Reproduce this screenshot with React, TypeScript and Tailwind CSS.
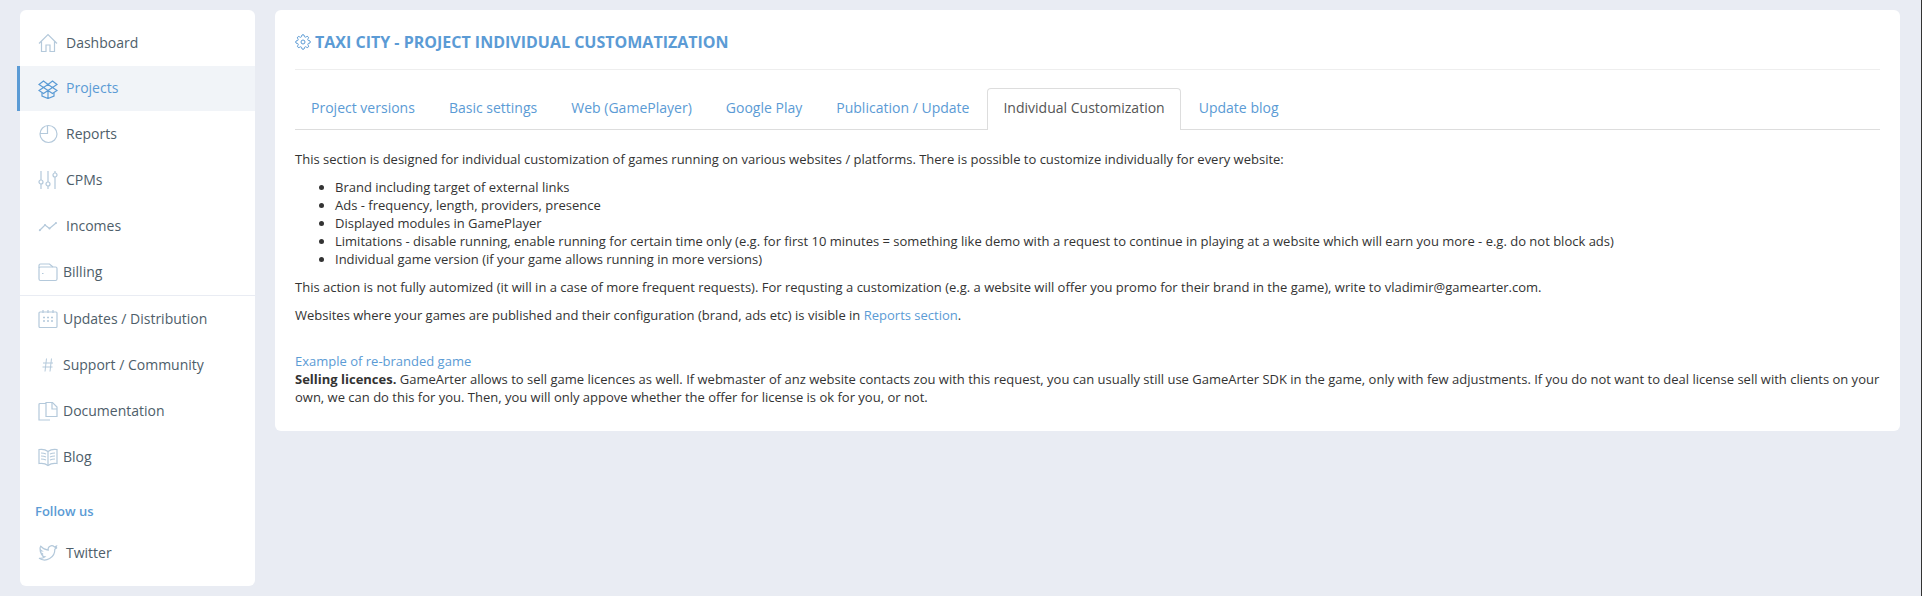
import React from "react";

const font = { fontFamily: '"Open Sans", sans-serif' };

function Ic({ children, className = "" }: { children: React.ReactNode; className?: string }) {
  return (
    <svg viewBox="0 0 20 20" fill="none" stroke="currentColor" strokeWidth="1.2" className={"mt-[2px] w-5 h-5 shrink-0 " + className}>
      {children}
    </svg>
  );
}

const icons: Record<string, React.ReactNode> = {
  home: <path d="M1 10.5 10 1.500l9 9M3.500 8.500v10h4.500v-6.500h4v6.500h4.500v-10" />,
  box: (
    <>
      <path d="M5.500 2 1 5.500l4.500 3L10 5.500zM14.500 2 19 5.500l-4.500 3L10 5.500zM1 11.500l4.500-3 4.500 3-4.500 3zM19 11.500l-4.500-3-4.500 3 4.500 3z" />
      <path d="M4 14v3l6 2.500 6-2.500v-3M10 11.500v8" />
    </>
  ),
  pie: (
    <>
      <circle cx="10.500" cy="10" r="8.500" />
      <path d="M9.500 1.500v8H2" />
    </>
  ),
  sliders: (
    <>
      <path d="M3 1v9M3 14v5M10 1v11M10 16v3M17 1v2M17 7v12" />
      <circle cx="3" cy="12" r="2" />
      <circle cx="10" cy="14" r="2" />
      <circle cx="17" cy="5" r="2" />
    </>
  ),
  chart: (
    <>
      <path d="M1.500 14.500 7 9l4.500 3.500L18 7" strokeWidth="1.300" />
      <circle cx="1.800" cy="14.300" r="1" fill="currentColor" stroke="none" />
      <circle cx="7" cy="9" r="1" fill="currentColor" stroke="none" />
      <circle cx="11.500" cy="12.500" r="1" fill="currentColor" stroke="none" />
      <circle cx="18" cy="7" r="1" fill="currentColor" stroke="none" />
    </>
  ),
  wallet: (
    <>
      <path d="M1 6V3.500A1.500 1.500 0 0 1 2.500 2h9L15 5" />
      <rect x="1" y="5" width="18" height="13.500" rx="1.500" />
      <path d="M4 11.500h1.500" />
    </>
  ),
  cal: (
    <>
      <rect x="1" y="3" width="18" height="15.500" rx="1" />
      <path d="M5 1v3M10 1v3M15 1v3" />
      <path d="M5 8.500h2M9 8.500h2M13 8.500h2M5 12h2M9 12h2M13 12h2" strokeWidth="1.500" />
    </>
  ),
  hash: <path d="M8.500 3.500 7 16.500M13.500 3.500l-1.500 13M5 8h10M4.500 12h10" strokeWidth="1" />,
  doc: (
    <>
      <path d="M8 2.500H2a1 1 0 0 0-1 1V19h11" />
      <path d="M8 4v11.500h11V6l-4.500-4.500H8z" />
      <path d="M14 1.500V8h5" />
    </>
  ),
  book: (
    <>
      <path d="M1 2.500C4 2 7.500 2.500 10 4.500 12.500 2.500 16 2 19 2.500v14c-3-.5-6.500 0-9 2-2.500-2-6-2.500-9-2z" />
      <path d="M10 4.500v14M3 6c2 0 3.500.3 5 1M3 9c2 0 3.500.3 5 1M3 12c2 0 3.500.3 5 1M17 6c-2 0-3.500.3-5 1M17 9c-2 0-3.500.3-5 1M17 12c-2 0-3.500.3-5 1" />
    </>
  ),
  twitter: (
    <path d="M19 4.500c-.7.300-1.400.500-2 .600.700-.500 1.300-1.200 1.500-2-.700.400-1.400.700-2.200.800a3.600 3.600 0 0 0-6.100 3.300C7.300 7 4.700 5.500 2.700 3.200c-1 1.700-.5 3.800 1.100 4.800-.6 0-1.100-.2-1.600-.4 0 1.700 1.200 3.200 2.900 3.600-.5.100-1.100.2-1.600.1.500 1.400 1.800 2.400 3.400 2.500A7.300 7.300 0 0 1 1 15.300a10.300 10.300 0 0 0 15.800-9.100c.9-.400 1.600-1 2.200-1.700z" />
  ),
};

type Item = { label: string; icon: string; active?: boolean; wide: boolean; sep?: boolean };

const items: Item[] = [
  { label: "Dashboard", icon: "home", wide: true },
  { label: "Projects", icon: "box", active: true, wide: true },
  { label: "Reports", icon: "pie", wide: true },
  { label: "CPMs", icon: "sliders", wide: true },
  { label: "Incomes", icon: "chart", wide: true },
  { label: "Billing", icon: "wallet", wide: false, sep: true },
  { label: "Updates / Distribution", icon: "cal", wide: false },
  { label: "Support / Community", icon: "hash", wide: false },
  { label: "Documentation", icon: "doc", wide: false },
  { label: "Blog", icon: "book", wide: false },
];

function NavRow({ it }: { it: Item }) {
  return (
    <a
      className={
        "flex items-center pb-[2px] text-[14px] " +
        (it.wide ? "gap-[8px] " : "gap-[5px] ") +
        (it.active
          ? "-ml-[3px] h-[45px] border-l-[3px] border-[#5b9bd5] bg-[#f1f4f8] pl-[18px] text-[#5b9bd5]"
          : "h-[46px] pl-[18px] text-[#4e5e6a]")
      }
    >
      <Ic className={it.active ? "text-[#5b9bd5]" : "text-[#b4c9db]"}>{icons[it.icon]}</Ic>
      <span>{it.label}</span>
    </a>
  );
}

const tabs = ["Project versions", "Basic settings", "Web (GamePlayer)", "Google Play", "Publication / Update", "Individual Customization", "Update blog"];

export default function App() {
  return (
    <div style={font} className="flex h-[596px] w-full overflow-hidden bg-[#e9ecf3] text-[13px] text-[#333]">
      <div className="flex min-w-0 flex-1 gap-5 py-2.5 pl-5 pr-[21px]">
        <aside className="flex w-[235px] shrink-0 flex-col rounded-md bg-white pt-[10px]">
          {items.map((it) => (
            <React.Fragment key={it.label}>
              <NavRow it={it} />
              {it.sep && <div className="h-px bg-[#e9ecf3]" />}
            </React.Fragment>
          ))}
          <div className="mt-[22px] pl-[15px] text-[13px] font-semibold leading-[18px] text-[#5b9bd5]">Follow us</div>
          <div className="mt-[10px] flex h-[46px] items-center gap-[8px] pb-[2px] pl-[18px] text-[14px] text-[#4e5e6a]">
            <Ic className="text-[#b4c9db]">{icons.twitter}</Ic>
            <span>Twitter</span>
          </div>
        </aside>
        <main className="h-[421px] min-w-0 flex-1 rounded-md bg-white px-5 pt-[20px]">
          <div className="flex h-[40px] items-start gap-[4px] border-b border-[#eeeeee] text-[#5b9bd5]">
            <svg viewBox="0 0 24 24" fill="none" stroke="currentColor" strokeWidth="1.500" className="mt-[4px] h-[16px] w-[16px]">
              <circle cx="12" cy="12" r="3" />
              <path d="M19.400 15a1.650 1.650 0 0 0 .33 1.820l.06.06a2 2 0 1 1-2.830 2.830l-.06-.06a1.650 1.650 0 0 0-2.820 1.170V21a2 2 0 1 1-4 0v-.09A1.650 1.650 0 0 0 7.260 19.700l-.06.06a2 2 0 1 1-2.830-2.830l.06-.06a1.650 1.650 0 0 0-1.170-2.820H3a2 2 0 1 1 0-4h.09A1.650 1.650 0 0 0 4.300 7.260l-.06-.06a2 2 0 1 1 2.830-2.830l.06.06a1.650 1.650 0 0 0 2.820-1.170V3a2 2 0 1 1 4 0v.09a1.650 1.650 0 0 0 2.820 1.170l.06-.06a2 2 0 1 1 2.830 2.830l-.06.06a1.650 1.650 0 0 0 1.170 2.820H21a2 2 0 1 1 0 4h-.09a1.650 1.650 0 0 0-1.510 1z" />
            </svg>
            <h1 className="text-[16px] font-bold uppercase leading-[24px]">Taxi City - Project individual customatization</h1>
          </div>
          <div className="mt-[18px] flex h-[42px] border-b border-[#dddddd]">
            {tabs.map((t) => {
              const active = t === "Individual Customization";
              return (
                <a
                  key={t}
                  className={
                    "-mb-px mr-[2px] h-[42px] rounded-t-[4px] border border-b-0 px-[15px] text-[14.03px] leading-[38px] " +
                    (active ? "border-[#dddddd] bg-white text-[#555555]" : "border-transparent text-[#5b9bd5]")
                  }
                >
                  {t}
                </a>
              );
            })}
          </div>
          <div className="mt-[20px] leading-[18px]">
            <p>This section is designed for individual customization of games running on various websites / platforms. There is possible to customize individually for every website:</p>
            <ul className="my-[10px] list-disc pl-[40px]">
              <li>Brand including target of external links</li>
              <li>Ads - frequency, length, providers, presence</li>
              <li>Displayed modules in GamePlayer</li>
              <li>Limitations - disable running, enable running for certain time only (e.g. for first 10 minutes = something like demo with a request to continue in playing at a website which will earn you more - e.g. do not block ads)</li>
              <li>Individual game version (if your game allows running in more versions)</li>
            </ul>
            <p>This action is not fully automized (it will in a case of more frequent requests). For requsting a customization (e.g. a website will offer you promo for their brand in the game), write to vladimir@gamearter.com.</p>
            <p className="mt-[10px]">
              Websites where your games are published and their configuration (brand, ads etc) is visible in <a className="text-[#5b9bd5]">Reports section</a>.
            </p>
            <p className="mt-[28px]"><a className="text-[#5b9bd5]">Example of re-branded game</a></p>
            <p>
              <b>Selling licences.</b> GameArter allows to sell game licences as well. If webmaster of anz website contacts zou with this request, you can usually still use GameArter SDK in the game, only with few adjustments. If you do not want to deal license sell with clients on your own, we can do this for you. Then, you will only appove whether the offer for license is ok for you, or not.
            </p>
          </div>
        </main>
      </div>
      <div className="w-px shrink-0 bg-[#333]" />
    </div>
  );
}
